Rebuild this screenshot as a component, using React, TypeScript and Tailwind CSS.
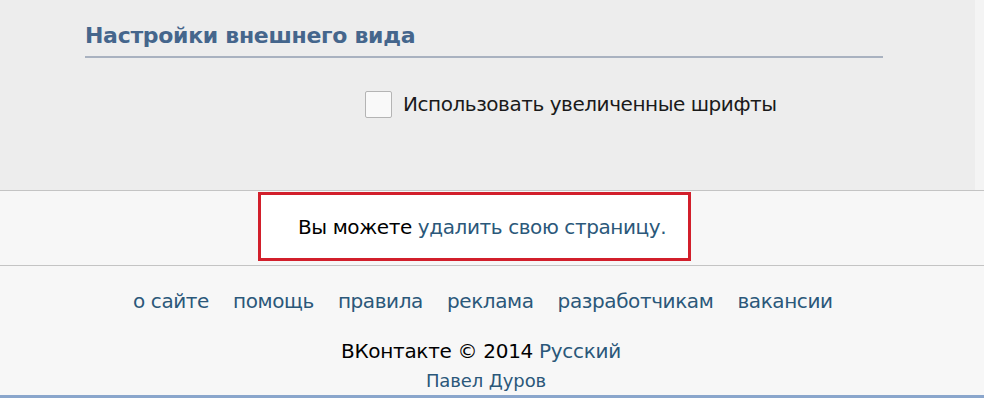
import React from "react";

export default function App() {
  const link = "text-[#2b587a]";
  const links = ["о сайте", "помощь", "правила", "реклама", "разработчикам", "вакансии"];
  return (
    <div
      className="w-[984px] h-[398px] overflow-hidden bg-[#f7f7f7] flex flex-col"
      style={{ fontFamily: '"DejaVu Sans", Tahoma, sans-serif' }}
    >
      <div className="flex h-[191px] border-b border-[#c4c4c4] shrink-0">
        <div className="w-[975px] bg-[#ededed] pl-[85px] pr-[92px] pt-[22px]">
          <div className="text-[22px] leading-[28px] font-bold text-[#45668c] tracking-[-0.3px] border-b-2 border-[#a9b2c0] pb-[6px]">
            Настройки внешнего вида
          </div>
          <div className="flex items-center mt-[32px] ml-[280px] gap-[11px]">
            <div className="w-[27px] h-[27px] border border-[#b4b4b4] rounded-[2px] bg-[#f9f9f9]" />
            <span className="text-[20px] leading-[28px] text-[#1a1a1a] tracking-[-0.45px]">
              Использовать увеличенные шрифты
            </span>
          </div>
        </div>
        <div className="flex-1 bg-[#f4f4f4]" />
      </div>
      <div className="h-[75px] border-b border-[#c4c4c4] shrink-0 pt-[1px]">
        <div className="ml-[258px] w-[433px] h-[69px] border-[3px] border-[#d21f2b] bg-white flex items-center pl-[37px]">
          <span className="text-[20px] leading-[28px] tracking-[-0.4px] text-black">
            Вы можете <span className={link}>удалить свою страницу.</span>
          </span>
        </div>
      </div>
      <div className="flex ml-[133px] gap-[24px] mt-[21px] text-[20px] leading-[28px] tracking-[-0.4px]">
        {links.map((l) => (
          <span key={l} className={link}>
            {l}
          </span>
        ))}
      </div>
      <div className="flex justify-center pr-[22px] mt-[22px] text-[20px] leading-[28px] tracking-[-0.3px] text-black">
        <span>
          ВКонтакте © 2014 <span className={link}>Русский</span>
        </span>
      </div>
      <div className="flex justify-center pr-[12px] mt-[3px] text-[18px] leading-[26px] tracking-[-0.1px]">
        <span className={link}>Павел Дуров</span>
      </div>
      <div className="mt-auto h-[3px] bg-[#8aa6cc]" />
    </div>
  );
}
